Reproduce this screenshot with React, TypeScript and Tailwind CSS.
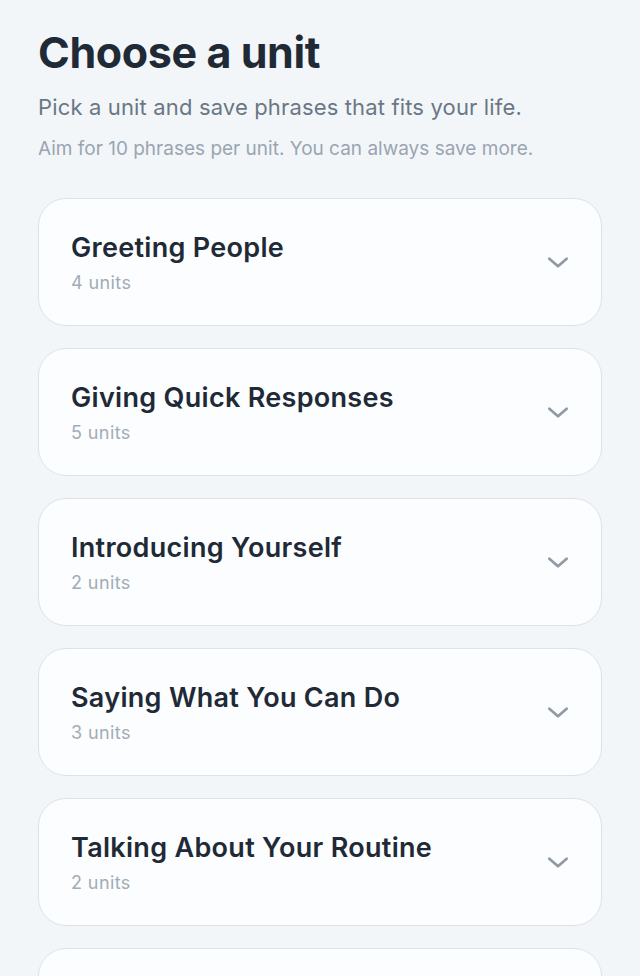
const units = [
  { title: "Greeting People", count: 4 },
  { title: "Giving Quick Responses", count: 5 },
  { title: "Introducing Yourself", count: 2 },
  { title: "Saying What You Can Do", count: 3 },
  { title: "Talking About Your Routine", count: 2 },
  { title: "Asking Simple Questions", count: 4 },
];

export default function App() {
  return (
    <div
      className="h-[976px] overflow-hidden bg-[#f2f6f9] px-[38px] pt-[28px]"
      style={{ fontFamily: "Inter, 'Noto Sans', sans-serif" }}
    >
      <h1 className="text-[43px] font-bold leading-[48px] tracking-[-0.4px] text-[#1f2a36]">
        Choose a unit
      </h1>
      <p className="mt-[17px] text-[22px] leading-[28px] tracking-[0.15px] text-[#6b7785]">
        Pick a unit and save phrases that fits your life.
      </p>
      <p className="mt-[16px] text-[19px] leading-[24px] text-[#9aa5b1]">
        Aim for 10 phrases per unit. You can always save more.
      </p>

      <div className="mt-[37px] flex flex-col gap-[22px]">
        {units.map((u) => (
          <button
            key={u.title}
            className="flex h-[128px] w-full shrink-0 items-center justify-between rounded-[28px] border border-[#dbe3ea] bg-[#fbfdfe] pl-[32px] pr-[30px] text-left"
          >
            <div className="flex flex-col pt-[2px]">
              <span className="text-[27px] font-semibold leading-[34px] tracking-[0.3px] text-[#1f2a36]">
                {u.title}
              </span>
              <span className="mt-[6px] text-[18px] leading-[24px] tracking-[0.4px] text-[#a2acb6]">
                {u.count} units
              </span>
            </div>
            <svg width="26" height="26" viewBox="0 0 24 24" fill="none">
              <path
                d="M4 9l8 7 8-7"
                stroke="#8f9aa5"
                strokeWidth="2.5"
                strokeLinecap="round"
                strokeLinejoin="round"
              />
            </svg>
          </button>
        ))}
      </div>
    </div>
  );
}
